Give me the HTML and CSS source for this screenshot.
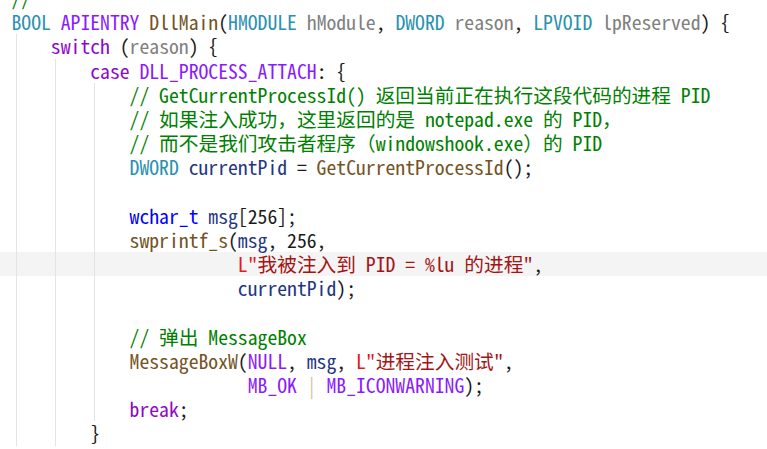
FILE: index.html
```html
<!DOCTYPE html>
<html>
<head>
<meta charset="utf-8">
<link rel="stylesheet" href="styles.css">
</head>
<body>
<div class="editor">
  <div class="ln"><div class="gd"></div><div class="code"><span class="c">//</span></div></div>
  <div class="ln"><div class="gd"></div><div class="code"><span class="t">BOOL</span> <span class="m">APIENTRY</span> <span class="f">DllMain</span>(<span class="t">HMODULE</span> <span class="p">hModule</span>, <span class="t">DWORD</span> <span class="p">reason</span>, <span class="t">LPVOID</span> <span class="p">lpReserved</span>) {</div></div>
  <div class="ln"><div class="gd"><span class="g"></span></div><div class="code"><span class="k">switch</span> (<span class="p">reason</span>) {</div></div>
  <div class="ln"><div class="gd"><span class="g"></span><span class="g"></span></div><div class="code"><span class="k">case</span> <span class="m">DLL_PROCESS_ATTACH</span>: {</div></div>
  <div class="ln"><div class="gd"><span class="g"></span><span class="g"></span><span class="g"></span></div><div class="code"><span class="c">// GetCurrentProcessId() 返回当前正在执行这段代码的进程 PID</span></div></div>
  <div class="ln"><div class="gd"><span class="g"></span><span class="g"></span><span class="g"></span></div><div class="code"><span class="c">// 如果注入成功，这里返回的是 notepad.exe 的 PID，</span></div></div>
  <div class="ln"><div class="gd"><span class="g"></span><span class="g"></span><span class="g"></span></div><div class="code"><span class="c">// 而不是我们攻击者程序（windowshook.exe）的 PID</span></div></div>
  <div class="ln"><div class="gd"><span class="g"></span><span class="g"></span><span class="g"></span></div><div class="code"><span class="t">DWORD</span> <span class="v">currentPid</span> = <span class="f">GetCurrentProcessId</span>();</div></div>
  <div class="ln"><div class="gd"><span class="g"></span><span class="g"></span><span class="g"></span></div><div class="code"> </div></div>
  <div class="ln"><div class="gd"><span class="g"></span><span class="g"></span><span class="g"></span></div><div class="code"><span class="b">wchar_t</span> <span class="v">msg</span>[256];</div></div>
  <div class="ln"><div class="gd"><span class="g"></span><span class="g"></span><span class="g"></span></div><div class="code"><span class="f">swprintf_s</span>(<span class="v">msg</span>, 256,</div></div>
  <div class="ln cur"><div class="gd"><span class="g"></span><span class="g"></span><span class="g"></span></div><div class="code">           <span class="sl">L"</span><span class="s">我被注入到 PID = %lu 的进程"</span>,</div></div>
  <div class="ln"><div class="gd"><span class="g"></span><span class="g"></span><span class="g"></span></div><div class="code">           <span class="v">currentPid</span>);</div></div>
  <div class="ln"><div class="gd"><span class="g"></span><span class="g"></span><span class="g"></span></div><div class="code"> </div></div>
  <div class="ln"><div class="gd"><span class="g"></span><span class="g"></span><span class="g"></span></div><div class="code"><span class="c">// 弹出 MessageBox</span></div></div>
  <div class="ln"><div class="gd"><span class="g"></span><span class="g"></span><span class="g"></span></div><div class="code"><span class="f">MessageBoxW</span>(<span class="m">NULL</span>, <span class="v">msg</span>, <span class="sl">L"</span><span class="s">进程注入测试"</span>,</div></div>
  <div class="ln"><div class="gd"><span class="g"></span><span class="g"></span><span class="g"></span></div><div class="code">            <span class="m">MB_OK</span> <span class="op">|</span> <span class="m">MB_ICONWARNING</span>);</div></div>
  <div class="ln"><div class="gd"><span class="g"></span><span class="g"></span><span class="g"></span></div><div class="code"><span class="k">break</span>;</div></div>
  <div class="ln"><div class="gd"><span class="g"></span><span class="g"></span></div><div class="code">}</div></div>
</div>
</body>
</html>
```

FILE: styles.css
```css
html, body {
  margin: 0;
  padding: 0;
  background: #ffffff;
  overflow: hidden;
}

.editor {
  margin-top: -14px;
  font-family: "Noto Sans Mono CJK SC", "Noto Sans Mono", "Liberation Mono", monospace;
  font-size: 19.7px;
  line-height: 24.2px;
  color: #1a1a1a;
}

.ln {
  display: flex;
  height: 24.2px;
  padding-left: 11.5px;
}

.ln.cur {
  background: #f4f4f4;
}

.gd {
  display: flex;
  align-self: stretch;
}

.g {
  width: 4ch;
  background: linear-gradient(#e4e4e4, #e4e4e4) no-repeat 4px 0 / 1px 100%;
}

.code {
  white-space: pre;
}

.c { color: #008000; }
.t { color: #2b91af; }
.m { color: #8a1bff; }
.k { color: #8f08c4; }
.f { color: #74531f; }
.p { color: #808080; }
.v { color: #1f377f; }
.b { color: #0000ff; }
.s { color: #a31515; }
.sl { color: #e21b1b; }
.op { color: #d6c6a6; }
```
